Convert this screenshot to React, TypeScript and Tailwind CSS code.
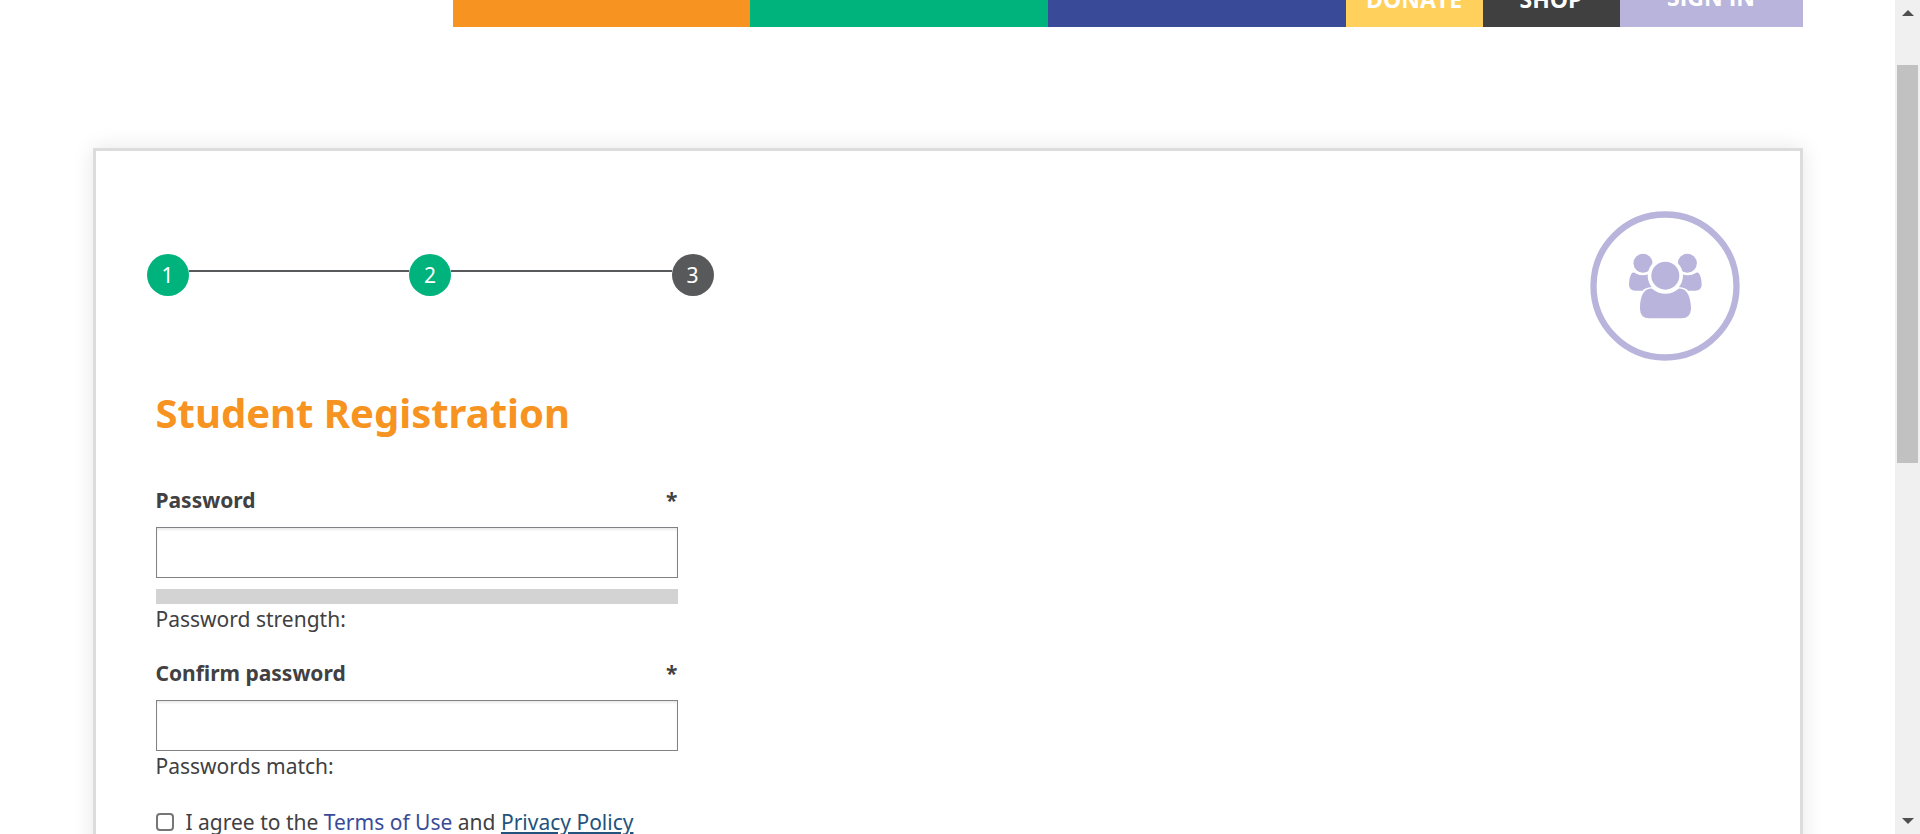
import type { ReactNode } from "react";

function MembersIcon() {
  return (
    <svg viewBox="60 63 450 450" className="size-[150px] shrink-0 text-[#b9b4db]" role="img" aria-label="Members">
      <circle cx="285" cy="288" r="214.5" fill="none" stroke="currentColor" strokeWidth="19" />
      <g fill="currentColor">
        <path d="M186 249Q190 245 199 251Q216 260 237 252L250 291Q228 291 217 302H196Q178 302 177 285Q177 261 186 249Z" />
        <path d="M386 249Q382 245 373 251Q356 260 335 252L322 291Q344 291 355 302H376Q394 302 395 285Q395 261 386 249Z" />
        <circle cx="219" cy="220" r="28.5" />
        <circle cx="352" cy="220" r="28.5" />
      </g>
      <circle cx="286" cy="257" r="53" fill="#fff" />
      <circle cx="286" cy="257" r="42" fill="currentColor" />
      <path
        d="M246 296Q286 327 326 296C350 293 363 320 363 358Q361 385 335 385H237Q211 385 210 358C209 320 222 293 246 296Z"
        fill="currentColor"
      />
    </svg>
  );
}

function Step({ n, current = false }: { n: number; current?: boolean }) {
  return (
    <li
      aria-current={current ? "step" : undefined}
      className={`flex size-[42px] shrink-0 items-center justify-center rounded-full text-[21px] leading-none text-white ${
        current ? "bg-[#58595b]" : "bg-[#00b37d]"
      }`}
    >
      {n}
    </li>
  );
}

function StepLine() {
  return <li aria-hidden="true" className="mb-2 h-[2px] flex-1 bg-[#58595b]" />;
}

function Field({ id, label, children }: { id: string; label: string; children: ReactNode }) {
  return (
    <div>
      <label htmlFor={id} className="flex justify-between text-[21px] leading-[28px] font-bold">
        <span>{label}</span>
        <span>*</span>
      </label>
      <input
        id={id}
        type="password"
        required
        className="mt-[13px] block h-[51px] w-full border border-[#808285] bg-white px-3 shadow-[inset_0_2px_2px_rgba(0,0,0,0.08)] outline-none"
      />
      {children}
    </div>
  );
}

function ScrollBar() {
  return (
    <div aria-hidden="true" className="flex w-[25px] shrink-0 flex-col items-center bg-[#f0f0f0]">
      <div className="flex h-[65px] flex-col pt-[10px]">
        <svg viewBox="0 0 12 6" className="h-[6px] w-[12px]">
          <path d="M6 0L12 6H0Z" fill="#505050" />
        </svg>
      </div>
      <div className="h-[398px] w-[21px] bg-[#c1c1c1]" />
      <div className="flex flex-1 flex-col justify-end pb-[10px]">
        <svg viewBox="0 0 12 6" className="h-[6px] w-[12px]">
          <path d="M6 6L12 0H0Z" fill="#505050" />
        </svg>
      </div>
    </div>
  );
}

export default function App() {
  const navItem = "flex items-end justify-center overflow-hidden text-[23px] leading-[24px]";
  return (
    <div className="flex h-screen overflow-hidden bg-white font-['Noto_Sans',sans-serif] text-[#414042]">
      <div className="min-w-0 flex-1 overflow-hidden">
        <div className="mx-auto w-full max-w-[1710px]">
          <nav className="ml-auto flex h-[27px] max-w-[1350px] font-['Open_Sans',sans-serif] font-bold text-white">
            <div className="flex-1 bg-[#f79320]" />
            <div className="flex-1 bg-[#00b37d]" />
            <div className="flex-1 bg-[#394b98]" />
            <a href="#donate" className={`${navItem} w-[137px] bg-[#ffd05c] pb-[16px]`}>DONATE</a>
            <a href="#shop" className={`${navItem} w-[137px] bg-[#404041] pb-[16px]`}>SHOP</a>
            <a href="#sign-in" className={`${navItem} w-[183px] bg-[#b9b4db] pb-[18px]`}>SIGN IN</a>
          </nav>

          <main className="mt-[121px] min-h-screen border-[3px] border-[#dcdcdc] shadow-[0_0_20px_rgba(0,0,0,0.1)]">
            <div className="flex justify-between pt-[60px] pr-[60px] pl-[51px]">
              <ol className="mt-[43px] flex h-[42px] w-[567px] items-center">
                <Step n={1} />
                <StepLine />
                <Step n={2} />
                <StepLine />
                <Step n={3} current />
              </ol>
              <MembersIcon />
            </div>

            <form className="mt-[24px] ml-[60px] w-[522px] text-[21px] leading-[28px]">
              <h1 className="text-[40px] leading-[56px] font-bold whitespace-nowrap text-[#f79320]">
                Student Registration
              </h1>
              <div className="mt-[45px]">
                <Field id="password" label="Password">
                  <div role="img" aria-label="Strength meter" className="mt-[11px] h-[15px] bg-[#d3d3d3]" />
                  <p className="mt-px">Password strength:</p>
                </Field>
              </div>
              <div className="mt-[26px]">
                <Field id="confirm" label="Confirm password">
                  <p className="mt-px">Passwords match:</p>
                </Field>
              </div>
              <div className="mt-[28px] flex items-center gap-3">
                <input
                  id="agree"
                  type="checkbox"
                  className="size-[18px] appearance-none rounded-[4px] border-2 border-[#767676] bg-white checked:bg-[#394b98]"
                />
                <label htmlFor="agree">
                  I agree to the{" "}
                  <a href="#terms" className="text-[#394b98]">Terms of Use</a> and{" "}
                  <a href="#privacy" className="text-[#23527c] underline">Privacy Policy</a>
                </label>
              </div>
            </form>
          </main>
        </div>
      </div>
      <ScrollBar />
    </div>
  );
}
